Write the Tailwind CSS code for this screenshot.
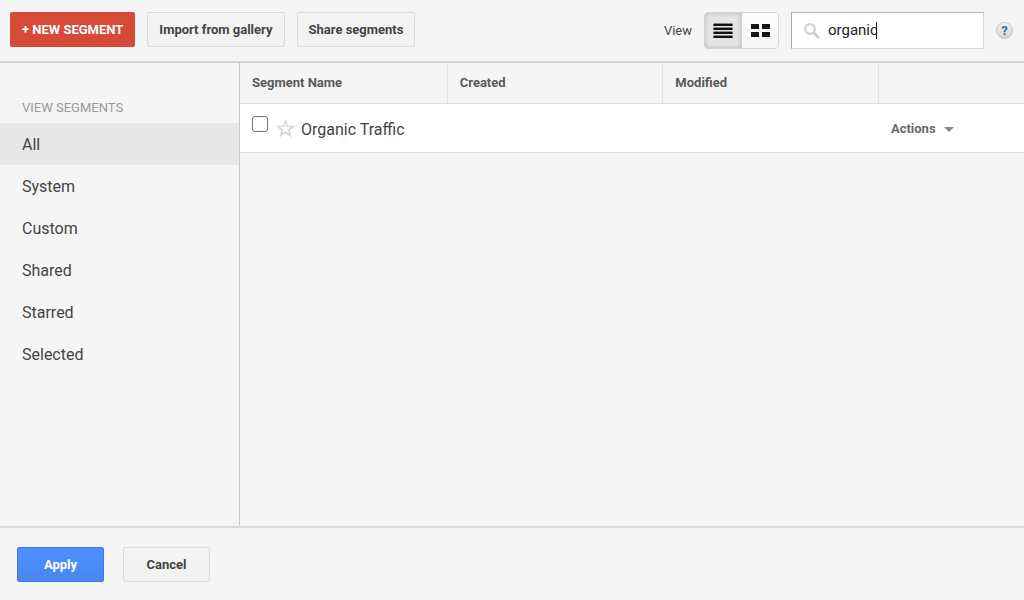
<!DOCTYPE html>
<html lang="en">
<head>
<meta charset="utf-8">
<meta name="viewport" content="width=device-width, initial-scale=1">
<title>Segments</title>
<script src="https://cdn.jsdelivr.net/npm/@tailwindcss/browser@4"></script>
</head>
<body class="flex min-h-screen flex-col bg-[#f5f5f5] font-['Roboto',sans-serif] text-[#444]">
  <header class="flex items-start justify-between border-b-2 border-[#d2d2d2] pt-3 pr-[11px] pb-3 pl-[10px]">
    <div class="flex gap-3">
      <button type="button" class="h-[35px] rounded-xs bg-[#d64a38] px-3 text-[13px] font-bold text-white">+ NEW SEGMENT</button>
      <button type="button" class="h-[35px] rounded-xs border border-[#dcdcdc] bg-linear-to-b from-[#f5f5f5] to-[#f1f1f1] px-[11px] text-[13px] font-bold">Import from gallery</button>
      <button type="button" class="h-[35px] rounded-xs border border-[#dcdcdc] bg-linear-to-b from-[#f5f5f5] to-[#f1f1f1] px-[11px] text-[13px] font-bold">Share segments</button>
    </div>
    <div class="flex items-center">
      <span class="mr-3 text-[13px]">View</span>
      <div class="mr-3 flex h-[37px] w-[75px] overflow-hidden rounded-sm border border-[#d4d4d4]">
        <button type="button" aria-label="List view" aria-pressed="true" class="flex flex-1 items-center justify-center border-r border-[#d0cdce] bg-[#e4e4e4] inset-shadow-[0_0_4px_#b8b4b6]">
          <svg width="20" height="15" viewBox="0 0 20 15" aria-hidden="true"><path fill="#888" d="M.5 0h19v15H.5z"/><path fill="#e4e4e4" d="M0 3h20v1H0zM0 7h20v1H0zM0 11h20v1H0z"/><path fill="#111" d="M.5 1h19v2H.5zM.5 5h19v2H.5zM.5 9h19v2H.5zM.5 13h19v2H.5z"/></svg>
        </button>
        <button type="button" aria-label="Grid view" aria-pressed="false" class="flex flex-1 items-center justify-center bg-linear-to-b from-[#fdfdfd] to-[#f6f6f6]">
          <svg width="19" height="15" viewBox="0 0 19 15" fill="#151515" aria-hidden="true"><path d="M0 1h8v5H0zM11 1h8v5h-8zM0 9h8v5H0zM11 9h8v5h-8z"/></svg>
        </button>
      </div>
      <label class="relative mr-3 flex h-[37px] w-[193px] items-center gap-2 border border-t-[#b9b2b5] border-r-[#d4d4d4] border-b-[#d9d9d9] border-l-[#aaa] bg-white pl-3">
        <svg class="shrink-0" width="16" height="16" viewBox="0 0 16 16" fill="none" stroke="#d0d0d0" aria-hidden="true"><circle cx="6" cy="6" r="4.8" stroke-width="2.2"/><path d="M9.7 9.7l5 5" stroke-width="3"/></svg>
        <input type="text" value="organic" aria-label="Search segments" class="h-6 w-full min-w-0 pb-px text-[15px] text-[#222] outline-none">
        <span class="absolute top-[9px] left-[84px] h-[17px] w-px bg-[#222]" aria-hidden="true"></span>
      </label>
      <button type="button" aria-label="Help" class="flex size-[17px] items-center justify-center rounded-full border border-[#c4c4c4] bg-linear-to-b from-[#f4f4f4] to-[#d4d4d4] text-[13px] leading-4 font-bold text-[#1f74b5]">?</button>
    </div>
  </header>

  <div class="flex flex-1">
    <nav aria-label="View segments" class="w-60 shrink-0 border-r border-[#c8c8c8]">
      <h2 class="px-[22px] pt-[37px] pb-[7px] text-[13px] leading-4 text-[#999]">VIEW SEGMENTS</h2>
      <ul class="text-base">
        <li><a href="#all" aria-current="page" class="flex h-[42px] items-center bg-[#e7e7e7] px-[22px] pt-[2px]">All</a></li>
        <li><a href="#system" class="flex h-[42px] items-center px-[22px] pt-[2px]">System</a></li>
        <li><a href="#custom" class="flex h-[42px] items-center px-[22px] pt-[2px]">Custom</a></li>
        <li><a href="#shared" class="flex h-[42px] items-center px-[22px] pt-[2px]">Shared</a></li>
        <li><a href="#starred" class="flex h-[42px] items-center px-[22px] pt-[2px]">Starred</a></li>
        <li><a href="#selected" class="flex h-[42px] items-center px-[22px] pt-[2px]">Selected</a></li>
      </ul>
    </nav>
    <main class="flex-1">
      <table class="w-full table-fixed border-separate border-spacing-0 text-left">
        <thead class="text-[13px] text-[#5a5a5a]">
          <tr class="h-[41px]">
            <th scope="col" class="w-[26.5%] border-r border-b border-[#e3e3e3] px-3">Segment Name</th>
            <th scope="col" class="w-[27.5%] border-r border-b border-[#e3e3e3] px-3">Created</th>
            <th scope="col" class="w-[27.5%] border-r border-b border-[#e3e3e3] px-3">Modified</th>
            <td class="border-b border-[#e3e3e3]"></td>
          </tr>
        </thead>
        <tbody class="bg-white">
          <tr class="h-[49px]">
            <td colspan="3" class="border-b border-[#e3e3e3] px-3">
              <div class="flex items-center">
                <input id="organic" type="checkbox" class="mr-2 mb-2 size-4 appearance-none rounded-[3px] border border-[#777] bg-white checked:bg-[#4787ed]">
                <button type="button" aria-label="Star segment" class="mr-[6px]">
                  <svg width="19" height="19" viewBox="0 0 19 19" fill="none" stroke="#d6d6d6" stroke-width="1.6" aria-hidden="true"><path d="M9.5 2l2 5.3 5.7.2-4.5 3.5 1.6 5.5-4.8-3.2-4.8 3.2 1.6-5.5-4.5-3.5 5.7-.2z"/></svg>
                </button>
                <label for="organic" class="pt-1 text-base">Organic Traffic</label>
              </div>
            </td>
            <td class="border-b border-[#e3e3e3] px-3 pt-[2px]">
              <button type="button" class="flex items-center gap-2 text-[13px] font-bold text-[#6a6a6a]">Actions
                <svg width="10" height="5" viewBox="0 0 10 5" fill="#888" aria-hidden="true"><path d="M0 0h10L5 5z"/></svg>
              </button>
            </td>
          </tr>
        </tbody>
      </table>
    </main>
  </div>

  <footer class="flex gap-[19px] border-t-2 border-[#d8d8d8] px-[17px] pt-[19px] pb-[18px]">
    <button type="button" class="h-[35px] w-[87px] rounded-xs border border-[#3b7be2] bg-linear-to-b from-[#4d90fe] to-[#4787ed] text-[13px] font-bold text-white">Apply</button>
    <button type="button" class="h-[35px] w-[87px] rounded-xs border border-[#dcdcdc] bg-linear-to-b from-[#f5f5f5] to-[#f1f1f1] text-[13px] font-bold">Cancel</button>
  </footer>
</body>
</html>
